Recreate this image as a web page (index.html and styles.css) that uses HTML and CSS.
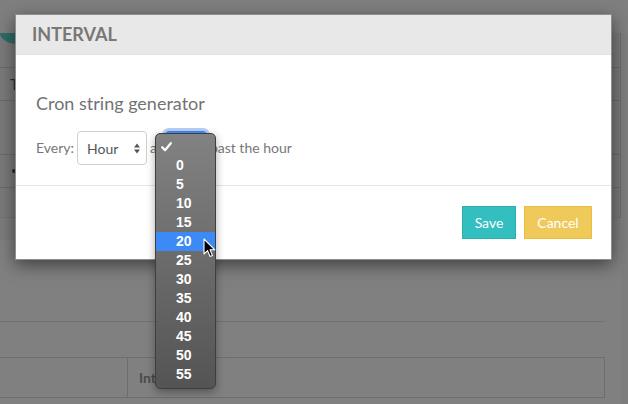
FILE: index.html
```html
<!DOCTYPE html>
<html>
<head>
<meta charset="utf-8">
<link rel="stylesheet" href="styles.css">
</head>
<body>
<div class="page">
  <div class="topbar"></div>
  <div class="layout">
    <div class="main">
      <div class="card">
        <div class="crow r1"><span class="logo"></span></div>
        <div class="crow r2">T</div>
        <div class="crow r3"></div>
        <div class="crow r4"><span class="dot"></span></div>
        <div class="crow r5"></div>
      </div>
      <div class="section">
        <div class="sec-top"></div>
        <div class="table-head">
          <div class="th th1"></div>
          <div class="th th2">Int</div>
        </div>
        <div class="table-row"></div>
      </div>
    </div>
    <div class="scroll"></div>
  </div>

  <div class="modal">
    <div class="modal-header">INTERVAL</div>
    <div class="modal-body">
      <div class="title">Cron string generator</div>
      <div class="row">
        <span class="lbl">Every:</span>
        <span class="select sel-hour">
          <span>Hour</span>
          <svg class="arrows" width="6" height="11" viewBox="0 0 6 11"><path d="M0 4.5 L3 0.5 L6 4.5 Z M0 6.5 L3 10.5 L6 6.5 Z" fill="#555"/></svg>
        </span>
        <span class="lbl">at</span>
        <span class="select sel-min"></span>
        <span class="lbl">past the hour</span>
      </div>
    </div>
    <div class="modal-footer">
      <button class="btn btn-save">Save</button>
      <button class="btn btn-cancel">Cancel</button>
    </div>
  </div>

  <div class="dropdown">
    <div class="opt"><svg class="check" width="11" height="10" viewBox="0 0 11 10"><path d="M1.2 5.2 L4 8.2 L9.8 1.2" fill="none" stroke="#fff" stroke-width="2.2" stroke-linecap="round" stroke-linejoin="round"/></svg></div>
    <div class="opt">0</div>
    <div class="opt">5</div>
    <div class="opt">10</div>
    <div class="opt">15</div>
    <div class="opt active">20</div>
    <div class="opt">25</div>
    <div class="opt">30</div>
    <div class="opt">35</div>
    <div class="opt">40</div>
    <div class="opt">45</div>
    <div class="opt">50</div>
    <div class="opt">55</div>
  </div>

  <svg class="cursor" width="13" height="20" viewBox="0 0 13 20"><path d="M1 1 L1 16 L4.6 12.6 L7 18.4 L9.4 17.4 L7 11.8 L11.8 11.8 Z" fill="#000" stroke="#fff" stroke-width="1.1" stroke-linejoin="round"/></svg>
</div>
</body>
</html>
```
FILE: styles.css
```css
* { box-sizing: border-box; }
html, body { margin: 0; padding: 0; }
body { background: #7c7c7c; }

.page {
  position: relative;
  width: 628px;
  height: 404px;
  overflow: hidden;
  background: #7c7c7c;
  font-family: Lato, "Liberation Sans", sans-serif;
}

/* background page (under overlay) */
.topbar { height: 33px; background: #7f7f7f; }
.layout { display: flex; }
.main { width: 621px; }
.scroll { flex: 1; background: #7d7d7d; height: 371px; }

.card {
  background: #7a7a7a;
  border-right: 1px solid #6e6e6e;
}
.crow { border-bottom: 1px solid #6b6b6b; }
.r1 { height: 35px; }
.r2 { height: 33px; padding-left: 10px; font-size: 15px; line-height: 33px; color: #2e2e2e; }
.r3 { height: 54px; }
.r4 { height: 33px; padding-left: 12px; display: flex; align-items: center; }
.r5 { height: 30px; border-bottom: 1px solid #727272; }
.logo {
  display: block;
  width: 40px;
  height: 11px;
  background: #2f6b66;
  border-bottom-left-radius: 18px 11px;
}
.dot { width: 4px; height: 4px; border-radius: 50%; background: #2a2a2a; }

.section {
  margin-top: 22px;
  background: #808080;
  height: 164px;
  padding-right: 16px;
}
.sec-top { height: 82px; border-bottom: 1px solid #727272; }
.table-head {
  margin-top: 35px;
  height: 41px;
  display: flex;
  border: 1px solid #6e6e6e;
  border-left: none;
}
.th { height: 100%; }
.th1 { width: 128px; border-right: 1px solid #6e6e6e; }
.th2 {
  flex: 1;
  padding-left: 11px;
  font-weight: 700;
  font-size: 14px;
  line-height: 39px;
  color: #4a4a4a;
}
.table-row { height: 10px; border-bottom: 1px solid #6e6e6e; }

/* modal */
.modal {
  position: absolute;
  left: 15px;
  top: 14px;
  width: 597px;
  background: #fff;
  border: 1px solid #8e8e8e;
  box-shadow: 0 5px 16px rgba(0, 0, 0, 0.5);
}
.modal-header {
  height: 40px;
  background: #e8e8e8;
  border-bottom: 1px solid #e0e0e0;
  padding-left: 16px;
  font-weight: 700;
  font-size: 18px;
  line-height: 39px;
  color: #777;
}
.modal-body {
  padding: 38px 20px 20px 20px;
  border-bottom: 1px solid #e5e5e5;
}
.title {
  font-size: 18px;
  line-height: 20px;
  color: #737373;
}
.row {
  margin-top: 18px;
  display: flex;
  align-items: center;
  gap: 3px;
  font-size: 14px;
  color: #777;
}
.lbl { line-height: 20px; }
.select {
  display: flex;
  align-items: center;
  justify-content: space-between;
  height: 34px;
  border-radius: 4px;
}
.sel-hour {
  width: 70px;
  border: 1px solid #cfcfcf;
  padding: 0 6px 0 9px;
  color: #555;
}
.sel-min {
  width: 42px;
  background: #4a90f4;
  border: 1px solid #3e86ee;
  box-shadow: 0 0 0 3px rgba(130, 175, 245, 0.6);
}
.modal-footer {
  display: flex;
  justify-content: flex-end;
  gap: 8px;
  padding: 20px 19px 20px 20px;
}
.btn {
  height: 33px;
  margin: 0;
  font-family: Lato, "Liberation Sans", sans-serif;
  font-size: 14px;
  color: #fff;
  border-radius: 0;
  padding: 0;
}
.btn-save { width: 54px; background: #33bfbf; border: 1px solid #2aaeae; }
.btn-cancel { width: 68px; background: #f0c95b; border: 1px solid #eabd3b; }

/* native-like popup menu */
.dropdown {
  position: absolute;
  left: 155px;
  top: 133px;
  width: 61px;
  height: 256px;
  padding: 3px 0 4px;
  border: 1px solid #3e3e3e;
  border-radius: 5px;
  background: linear-gradient(#828282, #545454);
  box-shadow: 0 3px 8px rgba(0, 0, 0, 0.35);
  font-family: "Liberation Sans", Arial, sans-serif;
  font-weight: 700;
  font-size: 14px;
  color: #fff;
}
.opt {
  height: 19px;
  line-height: 19px;
  padding-left: 20px;
  position: relative;
}
.opt.active { background: #3b8af6; }
.check { position: absolute; left: 5px; top: 5px; }

.cursor { position: absolute; left: 203px; top: 238px; }
```
